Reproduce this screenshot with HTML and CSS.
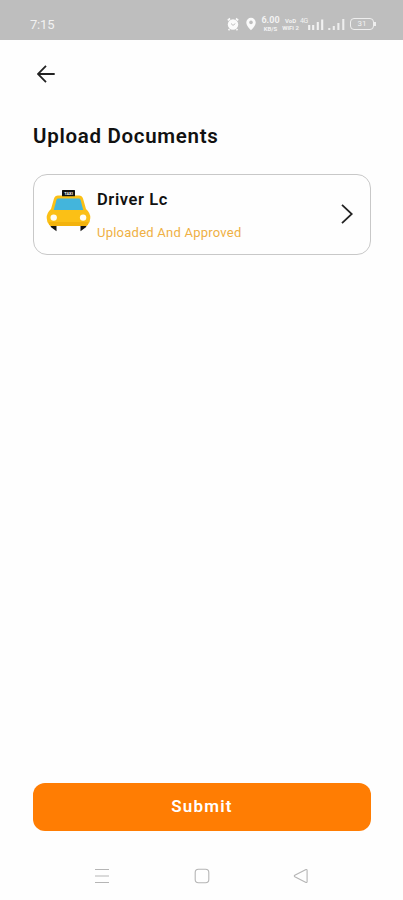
FILE: index.html
```html
<!DOCTYPE html>
<html lang="en">
<head>
    <meta charset="UTF-8">
    <meta name="viewport" content="width=device-width, initial-scale=1.0">
    <title>Upload Documents</title>
    <link rel="stylesheet" href="styles.css">
</head>
<body>
    <div class="status-bar">
        <span class="time">7:15</span>
        <div class="status-icons">
            <svg class="alarm" width="12" height="14" viewBox="0 0 12 14">
                <circle cx="6" cy="7.5" r="5.2" fill="#fafafa"/>
                <path d="M.8 3.4 3 1.5M11.2 3.4 9 1.5M2.5 12.2 1.5 13.3M9.5 12.2l1 1.1" stroke="#fafafa" stroke-width="1.7"/>
                <path d="M4 6.5 6 8.4l2.3-1.8" fill="none" stroke="#bebebe" stroke-width="1"/>
            </svg>
            <svg class="pin" width="10" height="14" viewBox="0 0 10 14">
                <path d="M5 .8A4.7 4.7 0 0 0 .3 5.5C.3 9 5 13.2 5 13.2S9.7 9 9.7 5.5A4.7 4.7 0 0 0 5 .8Z" fill="#fafafa"/>
                <circle cx="5" cy="5.4" r="1.8" fill="#bebebe"/>
            </svg>
            <div class="speed"><span>6.00</span><small>KB/S</small></div>
            <div class="volte"><span>VoD</span><span>WiFi 2</span></div>
            <div class="network">
                <span>4G</span>
                <svg width="16" height="12" viewBox="0 0 16 12">
                    <path d="M1.2 12V7M5.2 12V7M9.8 12V4M14.2 12V1.5" stroke="#f2f2f2" stroke-width="2.1"/>
                </svg>
            </div>
            <svg class="signal" width="17" height="12" viewBox="0 0 17 12">
                <path d="M1.3 12v-2M5.8 12V8M10.4 12V5M15.3 12V1" stroke="#eee" stroke-width="2.1"/>
            </svg>
            <div class="battery">31</div>
        </div>
    </div>

    <div class="content">
        <svg class="back" width="18" height="18" viewBox="0 0 18 18">
            <path d="M17.7 9H1M9 .9.9 9 9 17.1" fill="none" stroke="#222" stroke-width="1.8"/>
        </svg>
        <h1>Upload Documents</h1>
        <div class="card">
            <svg class="taxi" width="45" height="42" viewBox="0 0 45 42">
                <path d="M4.5 34h6v7.2L4.8 37ZM40.5 34h-6v7.2l5.7-4.2Z" fill="#111"/>
                <path d="M12 5.5H33Q36 5.5 37 8.5L40 19Q44.5 23 44.3 28Q44.2 32 42 34.5Q41 36 39 36H6Q4 36 3 34.5Q.8 32 .7 28Q.5 23 5 19L8 8.5Q9 5.5 12 5.5Z" fill="#fbc016"/>
                <path d="M3 32H42V34.5Q41 36 39 36H6Q4 36 3 34.5Z" fill="#f3b30d"/>
                <path d="M11.8 8.5H33.2Q34.2 8.5 34.6 10L37.2 20H7.8L10.4 10Q10.8 8.5 11.8 8.5Z" fill="#43b5dc"/>
                <rect x="16" width="13" height="6.2" rx=".5" fill="#111"/>
                <text x="22.5" y="4.6" text-anchor="middle" class="taxi-sign">TAXI</text>
                <circle cx="7.7" cy="27.6" r="3.2" fill="#fffdf2"/>
                <circle cx="37.1" cy="27.6" r="3.2" fill="#fffdf2"/>
            </svg>
            <div class="doc">
                <div class="doc-name">Driver Lc</div>
                <div class="doc-status">Uploaded And Approved</div>
            </div>
            <svg class="chevron" width="12" height="20" viewBox="0 0 12 20">
                <path d="M1 .8 10.8 10 1 19.2" fill="none" stroke="#222" stroke-width="1.8"/>
            </svg>
        </div>
        <button class="submit">Submit</button>
    </div>

    <div class="nav-bar">
        <svg width="16" height="16" viewBox="0 0 16 16">
            <path d="M1 1.5H15M1 8H15M1 14.5H15" stroke="#b5b5b5" stroke-width="1.1"/>
        </svg>
        <svg width="16" height="16" viewBox="0 0 16 16">
            <rect x="1.2" y="1.2" width="13.6" height="13.6" rx="3.2" fill="none" stroke="#b5b5b5" stroke-width="1.1"/>
        </svg>
        <svg width="16" height="16" viewBox="0 0 16 16">
            <path d="M13 1.5 1.8 7.3Q.8 8 1.8 8.7L13 14.5Q14.1 14.8 14.1 13.6V2.4Q14.1 1.2 13 1.5Z" fill="none" stroke="#b5b5b5" stroke-width="1.1"/>
        </svg>
    </div>
</body>
</html>
```
FILE: styles.css
```css
:root {
    --orange: #ff7d03;
    --amber: #efb044;
    --bar: #bebebe;
}
* {
    box-sizing: border-box;
}
body {
    margin: 0;
    height: 900px;
    display: flex;
    flex-direction: column;
    background: #fefefe;
    color: #111;
    font-family: Roboto, sans-serif;
}
svg {
    display: block;
    flex: none;
}
.status-bar {
    height: 40px;
    padding: 8px 27px 0 30px;
    display: flex;
    align-items: center;
    justify-content: space-between;
    background: var(--bar);
    color: #f2f2f2;
}
.time {
    font-size: 13px;
    letter-spacing: -0.2px;
}
.status-icons {
    display: flex;
    align-items: center;
}
.pin {
    margin-left: 7px;
}
.speed, .volte {
    display: flex;
    flex-direction: column;
    align-items: center;
    font-weight: 700;
}
.speed {
    width: 19px;
    margin-left: 5px;
    font-size: 9px;
    line-height: 9px;
}
.speed small {
    margin-top: 1px;
    font-size: 6px;
    line-height: 6px;
}
.volte {
    width: 17px;
    margin-left: 2px;
    font-size: 6px;
    line-height: 7px;
    white-space: nowrap;
}
.network {
    display: flex;
    align-items: flex-end;
    margin-left: 1px;
}
.network span {
    width: 7px;
    margin-right: 1px;
    align-self: flex-start;
    font-size: 7px;
    line-height: 7px;
    letter-spacing: -0.4px;
}
.signal {
    margin-left: 4px;
}
.battery {
    position: relative;
    width: 24px;
    height: 12px;
    margin-left: 5px;
    margin-right: 2px;
    border: 1px solid #eee;
    border-radius: 4px;
    font-size: 8px;
    line-height: 10px;
    text-align: center;
}
.battery::after {
    content: "";
    position: absolute;
    right: -3px;
    top: 3px;
    width: 2px;
    height: 4px;
    background: #eee;
}
.content {
    flex: 1;
    display: flex;
    flex-direction: column;
    padding: 25px 32px 0 33px;
}
.back {
    margin-left: 4px;
}
h1 {
    margin: 41px 0 0;
    font-size: 20.5px;
    line-height: 24px;
    font-weight: 600;
    letter-spacing: 0.7px;
}
.card {
    height: 81px;
    margin-top: 26px;
    padding: 0 17px 0 12px;
    display: flex;
    align-items: center;
    border: 1px solid #c8c8c8;
    border-radius: 14px;
}
.taxi {
    margin-top: -8px;
}
.taxi-sign {
    font-size: 4px;
    font-weight: 700;
    fill: #fff;
}
.doc {
    flex: 1;
    margin: 2px 0 0 6px;
}
.doc-name {
    font-size: 16.5px;
    line-height: 20px;
    font-weight: 600;
    letter-spacing: 0.6px;
}
.doc-status {
    margin-top: 14px;
    font-size: 13px;
    line-height: 18px;
    letter-spacing: 0.24px;
    color: var(--amber);
}
.chevron {
    margin-top: -2px;
}
.submit {
    height: 48px;
    margin-top: auto;
    padding: 0 0 2px;
    border: none;
    border-radius: 12px;
    background: var(--orange);
    color: #fff;
    font-family: inherit;
    font-size: 17px;
    font-weight: 600;
    letter-spacing: 1.2px;
}
.nav-bar {
    height: 69px;
    padding: 37px 94px 0;
    display: flex;
    justify-content: space-between;
}
```
